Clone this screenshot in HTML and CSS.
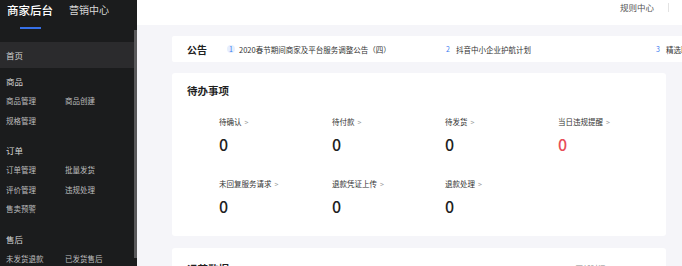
FILE: index.html
```html
<!DOCTYPE html>
<html lang="zh-CN">
<head>
<meta charset="utf-8">
<title>商家后台</title>
<link rel="stylesheet" href="styles.css">
</head>
<body>
<aside class="sidebar">
  <div class="brand">
    <div class="tab active"><span class="tab-text">商家后台</span><span class="tab-line"></span></div>
    <div class="tab"><span class="tab-text sub">营销中心</span></div>
  </div>
  <div class="menu-wrap">
    <nav class="menu">
      <div class="menu-home">首页</div>
      <div class="menu-section first">
        <div class="menu-head">商品</div>
        <div class="menu-grid">
          <span>商品管理</span><span>商品创建</span>
          <span>规格管理</span>
        </div>
      </div>
      <div class="menu-section">
        <div class="menu-head">订单</div>
        <div class="menu-grid">
          <span>订单管理</span><span>批量发货</span>
          <span>评价管理</span><span>违规处理</span>
          <span>售卖预警</span>
        </div>
      </div>
      <div class="menu-section">
        <div class="menu-head">售后</div>
        <div class="menu-grid">
          <span>未发货退款</span><span>已发货售后</span>
        </div>
      </div>
    </nav>
    <div class="scrollbar"><div class="thumb"></div></div>
  </div>
</aside>
<main class="main">
  <header class="topbar">
    <span class="rules">规则中心</span>
    <span class="top-divider"></span>
  </header>
  <div class="content">
    <section class="notice">
      <span class="notice-title">公告</span>
      <span class="notice-divider"></span>
      <div class="notice-item w1"><span class="num dot">1</span><span>2020春节期间商家及平台服务调整公告（四）</span></div>
      <div class="notice-item w2"><span class="num">2</span><span>抖音中小企业护航计划</span></div>
      <div class="notice-item"><span class="num">3</span><span>精选联盟商家招募计划</span></div>
    </section>
    <section class="card todo">
      <h2 class="card-title">待办事项</h2>
      <div class="todo-grid">
        <div class="todo-item"><div class="todo-label">待确认<span class="arrow">&gt;</span></div><div class="todo-value">0</div></div>
        <div class="todo-item"><div class="todo-label">待付款<span class="arrow">&gt;</span></div><div class="todo-value">0</div></div>
        <div class="todo-item"><div class="todo-label">待发货<span class="arrow">&gt;</span></div><div class="todo-value">0</div></div>
        <div class="todo-item"><div class="todo-label">当日违规提醒<span class="arrow">&gt;</span></div><div class="todo-value red">0</div></div>
        <div class="todo-item"><div class="todo-label">未回复服务请求<span class="arrow">&gt;</span></div><div class="todo-value">0</div></div>
        <div class="todo-item"><div class="todo-label">退款凭证上传<span class="arrow">&gt;</span></div><div class="todo-value">0</div></div>
        <div class="todo-item"><div class="todo-label">退款处理<span class="arrow">&gt;</span></div><div class="todo-value">0</div></div>
      </div>
    </section>
    <section class="card ops">
      <div class="ops-left"><h2 class="card-title inline">运营数据</h2><span class="ops-sub">昨日数据</span></div>
      <span class="ops-time">更新时间：2020/2/26</span>
    </section>
  </div>
</main>
</body>
</html>
```

FILE: styles.css
```css
* { box-sizing: border-box; }
html, body { margin: 0; padding: 0; }
body {
  width: 682px;
  height: 266px;
  overflow: hidden;
  display: flex;
  font-family: "Noto Sans CJK SC", "Noto Sans", sans-serif;
  background: #f5f5f9;
}

/* Sidebar */
.sidebar {
  width: 137px;
  flex: none;
  background: #1b1c1d;
  display: flex;
  flex-direction: column;
  color: #c9c9c9;
}
.brand {
  height: 30px;
  display: flex;
  padding-left: 7px;
  gap: 16px;
}
.tab {
  display: flex;
  flex-direction: column;
  align-items: center;
  height: 30px;
}
.tab-text {
  font-size: 11.5px;
  line-height: 20px;
  font-weight: 500;
  color: #ffffff;
  letter-spacing: 0;
}
.tab-text.sub {
  font-size: 10px;
  font-weight: 400;
  color: #d8d8d8;
}
.tab-line {
  width: 21px;
  height: 2px;
  background: #3670e8;
  margin-top: 7px;
}
.menu-wrap {
  flex: 1;
  display: flex;
  min-height: 0;
}
.menu {
  flex: 1;
  padding-top: 12px;
}
.scrollbar {
  width: 3px;
  flex: none;
}
.thumb {
  height: 228px;
  background: #59595b;
}
.menu-home {
  height: 26px;
  line-height: 26px;
  padding-left: 6px;
  font-size: 8.5px;
  background: #2b2b2d;
  color: #d4d4d4;
}
.menu-section { margin-top: 12px; }
.menu-section.first { margin-top: 5px; }
.menu-head {
  height: 16px;
  line-height: 16px;
  padding-left: 6px;
  font-size: 8.5px;
  color: #d4d4d4;
}
.menu-grid {
  margin-top: 2px;
  padding-left: 6px;
  display: grid;
  grid-template-columns: 59px 59px;
  grid-auto-rows: 19.5px;
  align-items: center;
  font-size: 7.5px;
  color: #bdbdbd;
}
.menu-grid span { line-height: 19.5px; white-space: nowrap; }

/* Main */
.main {
  flex: 1;
  min-width: 0;
  display: flex;
  flex-direction: column;
  overflow: hidden;
}
.topbar {
  height: 25px;
  flex: none;
  background: #ffffff;
  display: flex;
  justify-content: flex-end;
  align-items: flex-start;
  padding-top: 2px;
}
.rules {
  font-size: 8.5px;
  line-height: 10px;
  color: #555;
}
.top-divider {
  width: 1px;
  height: 9px;
  margin-top: 1px;
  margin-left: 14px;
  margin-right: 13px;
  background: #e3e3e3;
}
.content {
  padding: 11px 16px 0 35px;
  display: flex;
  flex-direction: column;
}
.notice {
  height: 26px;
  margin-right: -16px;
  background: #ffffff;
  display: flex;
  align-items: center;
  padding-left: 15px;
  white-space: nowrap;
  overflow: hidden;
  border-radius: 2px 0 0 2px;
}
.notice-title {
  font-size: 10px;
  font-weight: 700;
  color: #222;
}
.notice-divider {
  width: 1px;
  height: 9px;
  background: #e2e2e2;
  margin-left: 10px;
  margin-right: 10px;
}
.notice-item {
  display: flex;
  align-items: center;
  gap: 4px;
  font-size: 7.5px;
  color: #333;
  flex: none;
}
.notice-item.w1 { width: 217px; }
.notice-item.w2 { width: 210px; }
.num {
  width: 8px;
  height: 8px;
  border-radius: 50%;
  display: inline-flex;
  align-items: center;
  justify-content: center;
  color: #3c7cf0;
  font-size: 7px;
  line-height: 8px;
}
.num.dot { background: #e7effd; }

.card {
  background: #ffffff;
  border-radius: 3px;
}
.card-title {
  margin: 0;
  font-size: 10.5px;
  line-height: 16px;
  font-weight: 700;
  color: #1f1f1f;
}
.todo {
  margin-top: 11px;
  padding: 10px 15px 20px;
}
.todo-grid {
  margin-top: 17px;
  margin-left: 32px;
  display: grid;
  grid-template-columns: repeat(4, 113px);
  row-gap: 24px;
}
.todo-label {
  font-size: 7.5px;
  line-height: 12px;
  color: #333;
  white-space: nowrap;
}
.arrow {
  color: #999;
  margin-left: 3px;
  font-size: 7px;
}
.todo-value {
  margin-top: 6px;
  font-size: 16px;
  line-height: 20px;
  font-weight: 500;
  color: #1f1f1f;
}
.todo-value.red { color: #e84e58; }

.ops {
  margin-top: 12px;
  height: 40px;
  padding: 13px 18px 0 15px;
  display: flex;
  justify-content: space-between;
  align-items: flex-start;
}
.ops-left { display: flex; align-items: baseline; gap: 4px; }
.card-title.inline { display: inline; }
.ops-sub { font-size: 7px; color: #999; }
.ops-time { font-size: 7.5px; line-height: 16px; color: #888; }
```
